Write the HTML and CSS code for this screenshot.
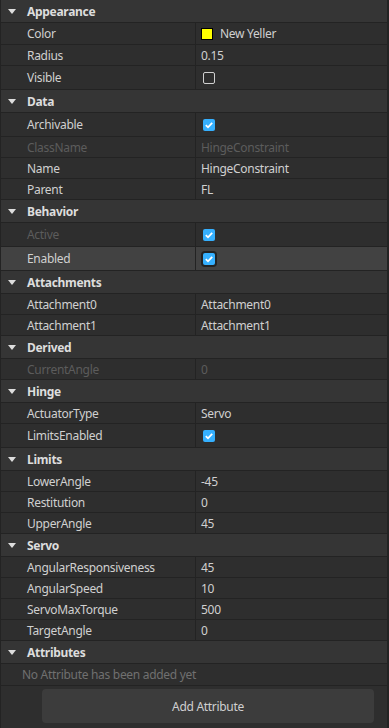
FILE: index.html
```html
<!DOCTYPE html>
<html lang="en">
  <head>
    <meta charset="UTF-8" />
    <meta name="viewport" content="width=device-width, initial-scale=1.0" />
    <title>Properties</title>
    <link rel="stylesheet" href="styles.css">
  </head>
  <body>
    <div class="panel">
      <div class="header"><span class="arrow"></span>Appearance</div>
      <div class="row color-row">
        <span class="name">Color</span>
        <span class="value"><i class="swatch"></i>New Yeller</span>
      </div>
      <div class="row"><span class="name">Radius</span><span class="value">0.15</span></div>
      <div class="row tall">
        <span class="name">Visible</span>
        <span class="value"><i class="check"></i></span>
      </div>

      <div class="header"><span class="arrow"></span>Data</div>
      <div class="row tall">
        <span class="name">Archivable</span>
        <span class="value"><i class="check on"></i></span>
      </div>
      <div class="row disabled"><span class="name">ClassName</span><span class="value">HingeConstraint</span></div>
      <div class="row"><span class="name">Name</span><span class="value">HingeConstraint</span></div>
      <div class="row"><span class="name">Parent</span><span class="value">FL</span></div>

      <div class="header"><span class="arrow"></span>Behavior</div>
      <div class="row tall disabled">
        <span class="name">Active</span>
        <span class="value"><i class="check on"></i></span>
      </div>
      <div class="row tall hover">
        <span class="name">Enabled</span>
        <span class="value"><i class="check on"></i></span>
      </div>

      <div class="header"><span class="arrow"></span>Attachments</div>
      <div class="row"><span class="name">Attachment0</span><span class="value">Attachment0</span></div>
      <div class="row"><span class="name">Attachment1</span><span class="value">Attachment1</span></div>

      <div class="header"><span class="arrow"></span>Derived</div>
      <div class="row disabled"><span class="name">CurrentAngle</span><span class="value">0</span></div>

      <div class="header"><span class="arrow"></span>Hinge</div>
      <div class="row"><span class="name">ActuatorType</span><span class="value">Servo</span></div>
      <div class="row tall">
        <span class="name">LimitsEnabled</span>
        <span class="value"><i class="check on"></i></span>
      </div>

      <div class="header"><span class="arrow"></span>Limits</div>
      <div class="row"><span class="name">LowerAngle</span><span class="value">-45</span></div>
      <div class="row"><span class="name">Restitution</span><span class="value">0</span></div>
      <div class="row"><span class="name">UpperAngle</span><span class="value">45</span></div>

      <div class="header"><span class="arrow"></span>Servo</div>
      <div class="row"><span class="name">AngularResponsiveness</span><span class="value">45</span></div>
      <div class="row"><span class="name">AngularSpeed</span><span class="value">10</span></div>
      <div class="row"><span class="name">ServoMaxTorque</span><span class="value">500</span></div>
      <div class="row"><span class="name">TargetAngle</span><span class="value">0</span></div>

      <div class="header"><span class="arrow"></span>Attributes</div>
      <div class="empty">No Attribute has been added yet</div>
      <div class="actions">
        <button class="add-button">Add Attribute</button>
      </div>
    </div>
  </body>
</html>
```

FILE: styles.css
```css
body {
  margin: 0;
  background-color: #2e2e2e;
  font-family: "Noto Sans", "Open Sans", sans-serif;
  font-size: 12px;
  letter-spacing: -0.3px;
  color: #d0d0d0;
}

.panel {
  width: 389px;
  height: 728px;
  box-sizing: border-box;
  border-left: 1px solid #232323;
  border-right: 2px solid #232323;
  background-color: #2e2e2e;
  overflow: hidden;
}

.header {
  height: 22px;
  display: flex;
  align-items: center;
  padding-left: 26px;
  position: relative;
  background-color: #353535;
  border-bottom: 1px solid #232323;
  font-weight: bold;
  color: #dddddd;
}

.arrow {
  position: absolute;
  left: 7px;
  top: 9px;
  width: 0;
  height: 0;
  border-left: 4px solid transparent;
  border-right: 4px solid transparent;
  border-top: 5px solid #dddddd;
}

.row {
  height: 20px;
  display: grid;
  grid-template-columns: 195px 1fr;
  border-bottom: 1px solid #232323;
}

.row.color-row {
  height: 21px;
}

.row.tall {
  height: 23px;
}

.row.hover {
  background-color: #424242;
}

.name,
.value {
  display: flex;
  align-items: center;
  white-space: nowrap;
}

.name {
  padding-left: 26px;
  border-right: 1px solid #232323;
}

.value {
  padding-left: 5px;
}

.disabled .name,
.disabled .value {
  color: #5c5c5c;
}

.swatch {
  width: 10px;
  height: 10px;
  margin-right: 7px;
  background-color: #ffff00;
  border: 1px solid #000000;
}

.check {
  width: 10px;
  height: 10px;
  margin-left: 2px;
  border: 1px solid #d0d0d0;
  border-radius: 2px;
}

.check.on {
  width: 12px;
  height: 12px;
  border: none;
  background-color: #35b0ff;
  background-image: url("data:image/svg+xml,%3Csvg xmlns='http://www.w3.org/2000/svg' width='12' height='12'%3E%3Cpath d='M2.8 6.2 L5 8.3 L9.2 3.8' fill='none' stroke='white' stroke-width='1.8'/%3E%3C/svg%3E");
}

.hover .check.on {
  box-shadow: 0 0 0 2px #222222;
}

.empty {
  height: 21px;
  display: flex;
  align-items: center;
  padding-left: 21px;
  border-bottom: 1px solid #232323;
  color: #707070;
}

.actions {
  padding: 3px 13px 0 41px;
}

.add-button {
  width: 100%;
  height: 34px;
  border: none;
  border-radius: 4px;
  background-color: #3c3c3c;
  color: #d0d0d0;
  font-family: inherit;
  font-size: 12px;
  letter-spacing: -0.3px;
}
```
